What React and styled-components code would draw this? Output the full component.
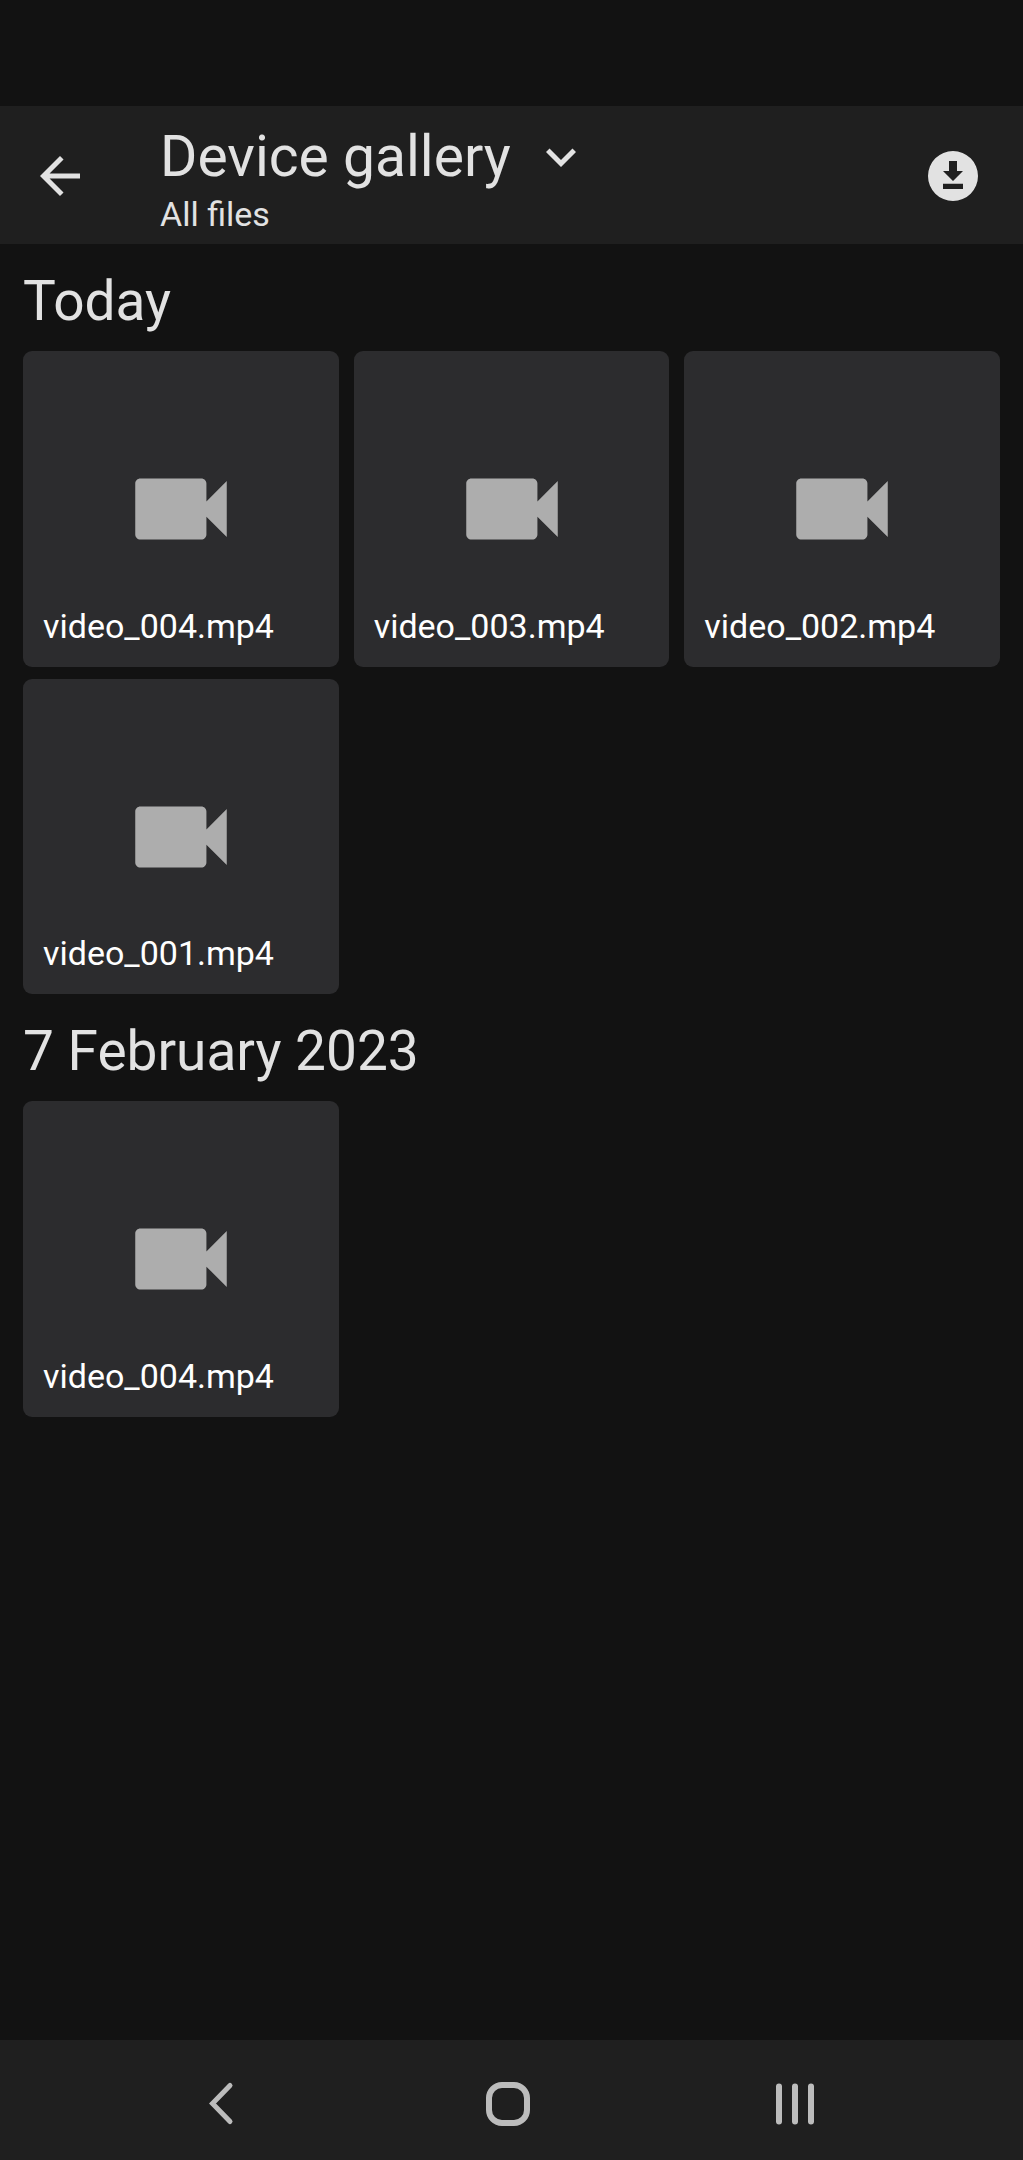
import React, { useState } from "react";
import styled, { createGlobalStyle } from "styled-components";

const GlobalStyle = createGlobalStyle`
  * {
    box-sizing: border-box;
  }
  body {
    margin: 0;
    background: #121212;
    color: #e2e2e2;
    font-family: Roboto, "Liberation Sans", sans-serif;
  }
  button {
    margin: 0;
    padding: 0;
    border: 0;
    background: none;
    color: inherit;
    font: inherit;
    cursor: pointer;
  }
  svg {
    display: block;
  }
`;

const Screen = styled.div`
  display: flex;
  flex-direction: column;
  min-height: 100vh;
`;

const StatusBar = styled.div`
  height: 106px;
`;

const AppBar = styled.header`
  display: flex;
  align-items: center;
  padding: 1px 40px 0 30px;
  background: #1f1f1f;
`;

const TitleBlock = styled.div`
  flex: 1;
  padding: 18px 0 10px 70px;
`;

const TitleButton = styled.button`
  display: flex;
  align-items: center;
  gap: 20px;
`;

const Title = styled.h1`
  margin: 0;
  font-size: 57px;
  font-weight: 400;
  line-height: 64px;
`;

const Subtitle = styled.p`
  margin: 5px 0 0;
  font-size: 34px;
  line-height: 40px;
`;

const Content = styled.main`
  flex: 1;
  padding: 0 23px;
`;

const SectionTitle = styled.h2`
  margin: 0;
  padding-top: 7px;
  font-size: 55px;
  font-weight: 400;
  line-height: 100px;
`;

const Grid = styled.div`
  display: grid;
  grid-template-columns: repeat(3, 1fr);
  gap: 12px 15px;
`;

// icon and label share one grid cell so the icon stays centred
const Card = styled.button`
  display: grid;
  grid-template-areas: "tile";
  aspect-ratio: 1;
  border-radius: 9px;
  background: #2c2c2e;
  color: #adadad;

  > * {
    grid-area: tile;
  }
  > svg {
    place-self: center;
  }
`;

const FileName = styled.span`
  place-self: end start;
  padding: 0 20px 21px;
  color: #fff;
  font-size: 34px;
  line-height: 40px;
`;

const NavBar = styled.nav`
  display: grid;
  grid-template-columns: repeat(3, 1fr);
  height: 120px;
  padding: 7px 84px 0 77px;
  background: #1f1f1f;
`;

const NavButton = styled.button`
  display: grid;
  place-items: center;
  color: #bcbcbc;
`;

const Icon = ({ size = 60, children }) => (
  <svg
    width={size}
    height={size}
    viewBox="0 0 24 24"
    fill="currentColor"
    aria-hidden="true"
  >
    {children}
  </svg>
);

const NavIcon = ({ stroke = 6, children }) => (
  <svg
    width="48"
    height="48"
    viewBox="0 0 48 48"
    fill="none"
    stroke="currentColor"
    strokeWidth={stroke}
    strokeLinecap="round"
    aria-hidden="true"
  >
    {children}
  </svg>
);

const sections = [
  {
    title: "Today",
    files: ["video_004.mp4", "video_003.mp4", "video_002.mp4", "video_001.mp4"]
  },
  { title: "7 February 2023", files: ["video_004.mp4"] }
];

const VideoCard = ({ name }) => (
  <Card type="button">
    <Icon size={122}>
      <path d="M17 10.5V7c0-.55-.45-1-1-1H4c-.55 0-1 .45-1 1v10c0 .55.45 1 1 1h12c.55 0 1-.45 1-1v-3.500l4 4v-11l-4 4z" />
    </Icon>
    <FileName>{name}</FileName>
  </Card>
);

export default function App() {
  const [open, setOpen] = useState(false);

  return (
    <Screen>
      <GlobalStyle />
      <StatusBar />
      <AppBar>
        <button type="button" aria-label="Back">
          <Icon>
            <path d="M20 11H7.830l5.590-5.590L12 4l-8 8 8 8 1.410-1.410L7.830 13H20v-2z" />
          </Icon>
        </button>
        <TitleBlock>
          <TitleButton
            type="button"
            aria-expanded={open}
            onClick={() => setOpen(!open)}
          >
            <Title>Device gallery</Title>
            <Icon>
              <path d="M7.410 8.590 12 13.170l4.590-4.580L18 10l-6 6-6-6z" />
            </Icon>
          </TitleButton>
          <Subtitle>All files</Subtitle>
        </TitleBlock>
        <button type="button" aria-label="Downloads">
          <Icon>
            <path
              fillRule="evenodd"
              d="M12 2a10 10 0 1 0 0 20 10 10 0 0 0 0-20zM10.400 6h3.200v4h2.400l-4 4-4-4h2.400zM8 15.100h8v2.100H8z"
            />
          </Icon>
        </button>
      </AppBar>
      <Content>
        {sections.map(section => (
          <section key={section.title}>
            <SectionTitle>{section.title}</SectionTitle>
            <Grid>
              {section.files.map(name => (
                <VideoCard key={name} name={name} />
              ))}
            </Grid>
          </section>
        ))}
      </Content>
      <NavBar aria-label="System">
        <NavButton type="button" aria-label="Back">
          <NavIcon stroke={5}>
            <path d="M33 5.500 15.500 23.500 33 41.500" />
          </NavIcon>
        </NavButton>
        <NavButton type="button" aria-label="Home">
          <NavIcon>
            <rect x="5" y="5" width="38" height="38" rx="13" />
          </NavIcon>
        </NavButton>
        <NavButton type="button" aria-label="Recent apps">
          <NavIcon>
            <path d="M8 6.500v35M24 6.500v35M40 6.500v35" />
          </NavIcon>
        </NavButton>
      </NavBar>
    </Screen>
  );
}
